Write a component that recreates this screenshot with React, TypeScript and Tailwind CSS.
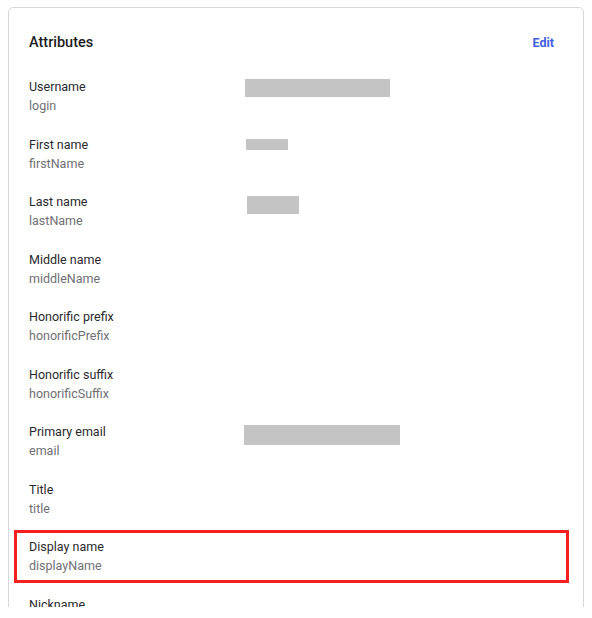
import React from 'react';

interface Attr {
  label: string;
  name: string;
  value?: { w: number; h: number; x: number; y: number };
  highlight?: boolean;
}

const attrs: Attr[] = [
  { label: 'Username', name: 'login', value: { w: 145, h: 18, x: 0, y: 12.5 } },
  { label: 'First name', name: 'firstName', value: { w: 42, h: 11, x: 1, y: 15 } },
  { label: 'Last name', name: 'lastName', value: { w: 52, h: 18, x: 2, y: 14.5 } },
  { label: 'Middle name', name: 'middleName' },
  { label: 'Honorific prefix', name: 'honorificPrefix' },
  { label: 'Honorific suffix', name: 'honorificSuffix' },
  { label: 'Primary email', name: 'email', value: { w: 156, h: 20, x: -1, y: 13.5 } },
  { label: 'Title', name: 'title' },
  { label: 'Display name', name: 'displayName', highlight: true },
  { label: 'Nickname', name: 'nickName' },
];

const AttrRow: React.FC<{ attr: Attr }> = ({ attr }) => (
  <div className="relative flex h-[57.5px]">
    <div className="w-[236px] shrink-0 pl-5 pt-[10.5px]">
      <div className="text-[12.5px] leading-[19px] text-[#2a2a2e]">{attr.label}</div>
      <div className="text-[12.5px] leading-[19px] text-[#707074]">{attr.name}</div>
    </div>
    <div className="flex-1">
      {attr.value && (
        <div
          className="bg-[#c4c4c4]"
          style={{
            width: attr.value.w,
            height: attr.value.h,
            marginLeft: attr.value.x,
            marginTop: attr.value.y,
          }}
        />
      )}
    </div>
    {attr.highlight && (
      <div className="absolute left-[5px] top-[3.5px] h-[53px] w-[555px] border-[3px] border-[#f42020]" />
    )}
  </div>
);

export default function App() {
  return (
    <div className="h-[618px] bg-white">
      <div className="h-[607px] overflow-hidden pl-2 pt-[7px] font-['Roboto',sans-serif]">
        <div className="h-[700px] w-[576px] rounded-[5px] border border-[#d8d8dc] bg-white">
          <div className="flex h-[58.5px] items-start justify-between pl-5 pr-[29px] pt-[25px]">
            <h2 className="text-[14.5px] font-medium leading-5 text-[#1d1d21]">Attributes</h2>
            <button className="text-[12.5px] font-bold leading-5 text-[#3f5fe0]">Edit</button>
          </div>
          {attrs.map(a => (
            <AttrRow key={a.name} attr={a} />
          ))}
        </div>
      </div>
    </div>
  );
}
